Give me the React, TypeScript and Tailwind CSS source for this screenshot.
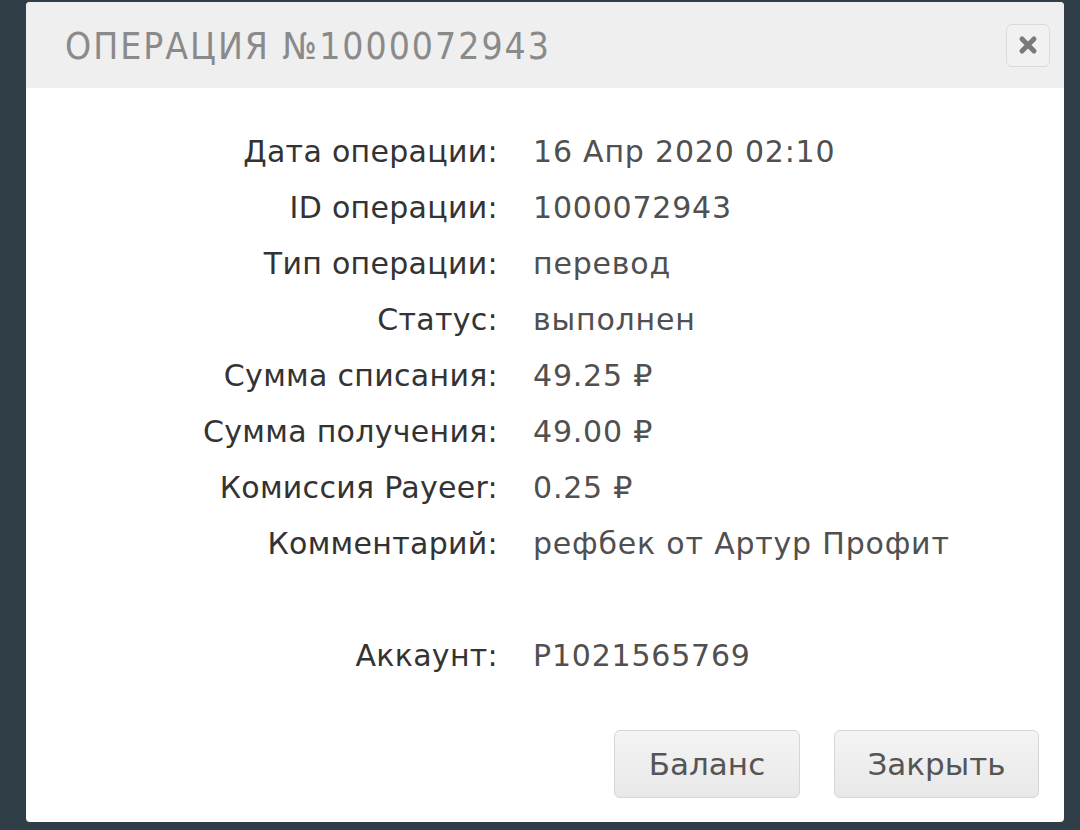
import React from "react";

const rows: [string, string][] = [
    ["Дата операции:", "16 Апр 2020 02:10"],
    ["ID операции:", "1000072943"],
    ["Тип операции:", "перевод"],
    ["Статус:", "выполнен"],
    ["Сумма списания:", "49.25 ₽"],
    ["Сумма получения:", "49.00 ₽"],
    ["Комиссия Payeer:", "0.25 ₽"],
    ["Комментарий:", "рефбек от Артур Профит"],
    ["", ""],
    ["Аккаунт:", "P1021565769"],
];

export default function App() {
    return (
        <div className="w-[1080px] h-[830px] bg-[#2f3e47] pl-[26px] pt-[2px] overflow-hidden">
            <div className="w-[1038px] h-[820px] bg-white rounded-[4px] flex flex-col overflow-hidden">
                {/* header */}
                <div className="h-[86px] bg-[#efefef] flex items-center justify-between pl-[39px] pr-[14px]">
                    <h1 className="text-[37px] text-[#8a8a8a] tracking-[2px] leading-none pt-[2px]" style={{ fontFamily: '"DejaVu Sans Condensed", "Liberation Sans Narrow", "Liberation Sans", sans-serif' }}>
                        ОПЕРАЦИЯ №1000072943
                    </h1>
                    <button className="w-[44px] h-[43px] border border-[#dadada] rounded-[6px] bg-[#f1f1f1] flex items-center justify-center text-[#7a7a7a]">
                        <svg width="20" height="20" viewBox="0 0 20 20">
                            <path d="M4 4 L16 16 M16 4 L4 16" stroke="currentColor" strokeWidth="5" strokeLinecap="round" />
                        </svg>
                    </button>
                </div>

                {/* details */}
                <div className="pt-[36px] grid grid-cols-[472px_1fr] gap-x-[35px]" style={{ fontFamily: '"DejaVu Sans", sans-serif' }}>
                    {rows.map(([label, value], i) => (
                        <React.Fragment key={i}>
                            <div className="h-[56px] leading-[56px] text-right text-[30px] tracking-[0.3px] text-[#333]">{label}</div>
                            <div className="h-[56px] leading-[56px] text-[30px] tracking-[0.8px] text-[#505050]">{value}</div>
                        </React.Fragment>
                    ))}
                </div>

                {/* buttons */}
                <div className="mt-auto mb-[24px] flex justify-end gap-[34px] pr-[25px]" style={{ fontFamily: '"DejaVu Sans", sans-serif' }}>
                    <button className="w-[186px] h-[68px] rounded-[6px] border border-[#d6d6d6] bg-gradient-to-b from-[#f4f4f4] to-[#e8e8e8] text-[31px] text-[#555]">Баланс</button>
                    <button className="w-[205px] h-[68px] rounded-[6px] border border-[#d6d6d6] bg-gradient-to-b from-[#f4f4f4] to-[#e8e8e8] text-[31px] text-[#555]">Закрыть</button>
                </div>
            </div>
        </div>
    );
}
